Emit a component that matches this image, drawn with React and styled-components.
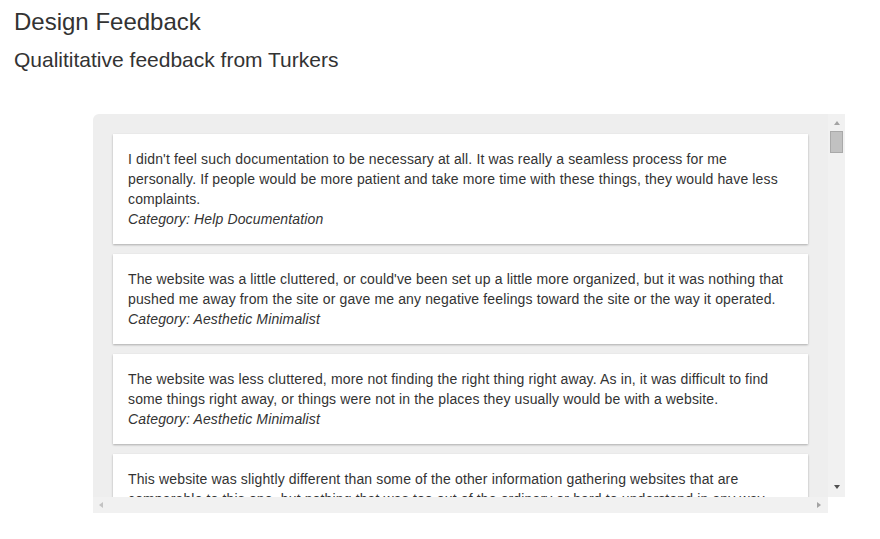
import React from 'react';
import styled, { createGlobalStyle } from 'styled-components';

const GlobalStyle = createGlobalStyle`
    body {
        margin: 0;
        background: #fff;
        color: #333;
        font-family: "Liberation Sans", Arial, sans-serif;
    }
`;

const Page = styled.div`
    padding: 9px 14px 0;
`;

const Title = styled.h3`
    margin: 0;
    font-size: 24px;
    font-weight: 400;
    line-height: 26px;
`;

const Subtitle = styled.h4`
    margin: 13px 0 0;
    font-size: 21px;
    font-weight: 400;
    line-height: 23px;
`;

const Frame = styled.div`
    display: grid;
    grid-template-columns: 735px 17px;
    grid-template-rows: 383px 16px;
    margin: 43px 0 0 79px;
    width: 752px;
`;

const Viewport = styled.div`
    background: #eee;
    border-top-left-radius: 6px;
    padding: 20px;
    overflow: hidden;
`;

const Card = styled.div`
    background: #fff;
    box-shadow: 0 1px 2px rgba(0, 0, 0, 0.28);
    padding: 15px;
    margin-bottom: 10px;
    font-size: 14px;
    line-height: 20px;
    letter-spacing: 0.14px;
`;

const Category = styled.em`
    display: block;
`;

const VBar = styled.div`
    background: #f1f1f1;
    display: flex;
    flex-direction: column;
    align-items: center;
    justify-content: space-between;
    padding: 7px 0 8px;
`;

const HBar = styled.div`
    background: #f1f1f1;
    display: flex;
    align-items: center;
    justify-content: space-between;
    padding: 0 7px 0 6px;
`;

const VTrack = styled.div`
    flex: 1;
    display: flex;
    flex-direction: column;
    align-items: center;
`;

const Thumb = styled.div`
    width: 11px;
    height: 20px;
    margin-top: 6px;
    background: #c1c1c1;
    border: 1px solid #a9a9a9;
`;

const Arrow = styled.span`
    width: 0;
    height: 0;
    border-style: solid;
    border-color: transparent;
    ${props => props.dir === 'up' && `
        border-width: 0 3.5px 4px;
        border-bottom-color: ${props.color};
    `}
    ${props => props.dir === 'down' && `
        border-width: 4px 3.5px 0;
        border-top-color: ${props.color};
    `}
    ${props => props.dir === 'left' && `
        border-width: 3.5px 4px 3.5px 0;
        border-right-color: ${props.color};
    `}
    ${props => props.dir === 'right' && `
        border-width: 3.5px 0 3.5px 4px;
        border-left-color: ${props.color};
    `}
`;

const feedback = [
    {
        text: "I didn't feel such documentation to be necessary at all. It was really a seamless process for me personally. If people would be more patient and take more time with these things, they would have less complaints.",
        category: 'Help Documentation'
    },
    {
        text: "The website was a little cluttered, or could've been set up a little more organized, but it was nothing that pushed me away from the site or gave me any negative feelings toward the site or the way it operated.",
        category: 'Aesthetic Minimalist'
    },
    {
        text: 'The website was less cluttered, more not finding the right thing right away. As in, it was difficult to find some things right away, or things were not in the places they usually would be with a website.',
        category: 'Aesthetic Minimalist'
    },
    {
        text: 'This website was slightly different than some of the other information gathering websites that are comparable to this one, but nothing that was too out of the ordinary or hard to understand in any way.',
        category: 'Aesthetic Minimalist'
    }
];

const App = () => {
    return (
        <>
            <GlobalStyle />
            <Page>
                <Title>Design Feedback</Title>
                <Subtitle>Qualititative feedback from Turkers</Subtitle>
                <Frame>
                    <Viewport>
                        {feedback.map((item, index) => (
                            <Card key={index}>
                                {item.text}
                                <Category>Category: {item.category}</Category>
                            </Card>
                        ))}
                    </Viewport>
                    <VBar>
                        <VTrack>
                            <Arrow dir="up" color="#a3a3a3" />
                            <Thumb />
                        </VTrack>
                        <Arrow dir="down" color="#505050" />
                    </VBar>
                    <HBar>
                        <Arrow dir="left" color="#c3c3c3" />
                        <Arrow dir="right" color="#a3a3a3" />
                    </HBar>
                </Frame>
            </Page>
        </>
    );
};

export default App;
